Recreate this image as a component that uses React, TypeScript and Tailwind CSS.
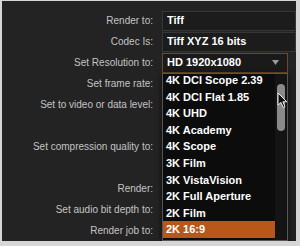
import React from "react";

const rows: { label: string; value?: string; select?: boolean; focus?: boolean; empty?: boolean }[] = [
  { label: "Render to:", value: "Tiff" },
  { label: "Codec Is:", value: "Tiff XYZ 16 bits" },
  { label: "Set Resolution to:", value: "HD 1920x1080", select: true, focus: true },
  { label: "Set frame rate:", select: true },
  { label: "Set to video or data level:", select: true },
  { label: "", empty: true },
  { label: "Set compression quality to:", select: true },
  { label: "", empty: true },
  { label: "Render:", select: true },
  { label: "Set audio bit depth to:", select: true },
  { label: "Render job to:", select: true },
];

const items = [
  "4K DCI Scope 2.39",
  "4K DCI Flat 1.85",
  "4K UHD",
  "4K Academy",
  "4K Scope",
  "3K Film",
  "3K VistaVision",
  "2K Full Aperture",
  "2K Film",
  "2K 16:9",
];

function Arrow() {
  return (
    <svg width="7" height="5" viewBox="0 0 7 5" className="shrink-0">
      <path d="M0 0 L7 0 L3.5 5 Z" fill="#9a9a9a" />
    </svg>
  );
}

export default function App() {
  return (
    <div className="h-[246px] w-[300px] overflow-hidden bg-[#d6d6d6] pl-[2px] pt-[1px] font-['Liberation_Sans',Arial,sans-serif]">
      <div className="relative h-[240px] w-[294px] overflow-hidden bg-[#232323] pt-[9px]">
        {rows.map((r, i) => (
          <div key={i} className="flex h-[21px] items-center">
            <div className="w-[152px] shrink-0 pr-[1px] text-right text-[10px] text-[#c4c4c4]">{r.label}</div>
            {!r.empty && (
              <div
                className={
                  "ml-[8px] flex h-[20px] items-center border pl-[4px] text-[11px] font-bold text-white " +
                  (r.focus ? "w-[126px] border-[#6e4a26] bg-[#1a1a1a] pr-[8px]" : r.select ? "w-[126px] border-[#3a3a3a] bg-[#1c1c1c] pr-[3px]" : "w-[140px] border-[#363636] bg-[#1c1c1c]")
                }
              >
                <span className="flex-1 truncate">{r.value}</span>
                {r.select && <Arrow />}
              </div>
            )}
          </div>
        ))}

        {/* open dropdown list */}
        <div className="absolute left-[160px] top-[72px] flex h-[168px] w-[126px] overflow-hidden border border-[#555] bg-[#0c0c0c] shadow-[0_2px_6px_rgba(0,0,0,0.7)]">
          <div className="-mt-[2px] flex-1">
            {items.map((it, i) => (
              <div
                key={it}
                className={
                  "flex h-[16.6px] items-center pl-[3px] text-[11px] font-bold text-white " +
                  (i === items.length - 1 ? "bg-[#b8571a]" : "")
                }
              >
                {it}
              </div>
            ))}
          </div>
          <div className="w-[12px] shrink-0 bg-[#141414] px-[2px] pt-[10px]">
            <div className="h-[47px] w-[8px] rounded-full bg-[#8a8a8a]" />
          </div>
        </div>

        {/* mouse pointer */}
        <svg className="absolute left-[275px] top-[91px]" width="12" height="17" viewBox="0 0 12 17">
          <path d="M1 1 L1 13 L4 10.5 L6.2 15.5 L8 14.7 L5.9 9.8 L9.8 9.8 Z" fill="#111" stroke="#eee" strokeWidth="1" strokeLinejoin="round" />
        </svg>
      </div>
    </div>
  );
}
